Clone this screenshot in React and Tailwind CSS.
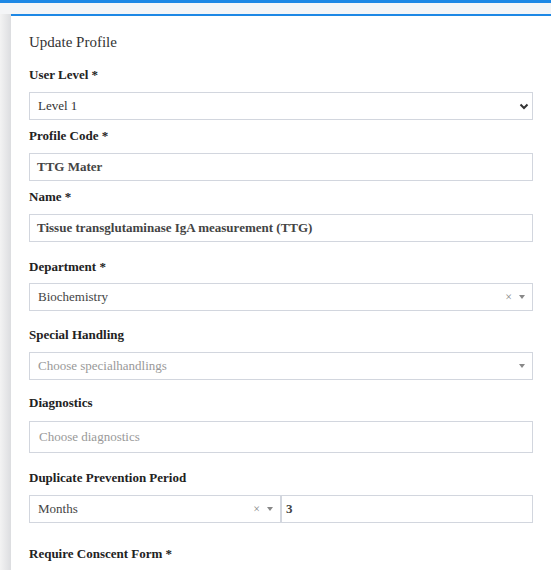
import { useState } from "react";

function Label({ children, className = "" }) {
    return (
        <div className={"text-[13px] leading-[18px] font-bold text-[#222] " + className}>
            {children}
        </div>
    );
}

function Arrow() {
    return (
        <span className="inline-block w-0 h-0 border-t-[4px] border-t-[#888] border-x-[3.5px] border-x-transparent" />
    );
}

function Select2({ value, placeholder, clearable, className = "" }) {
    return (
        <div
            className={
                "h-[28px] border border-[#d2d6de] bg-white flex items-center pl-[8px] pr-[7px] " +
                className
            }
        >
            <span
                className={
                    "flex-1 text-[13px] " +
                    (value ? "text-[#444]" : "text-[#999]")
                }
            >
                {value || placeholder}
            </span>
            {clearable && (
                <span className="text-[12px] text-[#888] mr-[7px] leading-none">
                    ×
                </span>
            )}
            <Arrow />
        </div>
    );
}

export default function App() {
    const [level] = useState("Level 1");

    return (
        <div
            className="min-h-[570px] bg-[#f4f5f7] flex flex-col"
            style={{ fontFamily: '"Liberation Serif", "Times New Roman", serif' }}
        >
            <div className="h-[3px] bg-[#1e88e5]" />
            <div className="flex flex-1 pt-[11px]">
                <div className="w-[11px] bg-gradient-to-r from-[#f3f3f3] to-[#dcdde0]" />
                <div className="flex-1 bg-white border-t-2 border-[#1e88e5] pl-[18px] pr-[18px] pt-[16px] pb-6">
                    <div className="text-[15px] leading-[20px] text-[#333]">
                        Update Profile
                    </div>

                    {/* user level */}
                    <Label className="mt-[14px]">User Level *</Label>
                    <div className="mt-[8px] h-[28px] border border-[#d2d6de] flex items-center pl-[8px] pr-[3px]">
                        <span className="flex-1 text-[13px] text-[#333]">{level}</span>
                        <svg width="10" height="7" viewBox="0 0 10 7">
                            <path
                                d="M1.5 1.5 L5 5 L8.5 1.5"
                                fill="none"
                                stroke="#333"
                                strokeWidth="2"
                            />
                        </svg>
                    </div>

                    <Label className="mt-[7px]">Profile Code *</Label>
                    <div className="mt-[8px] h-[28px] border border-[#d2d6de] flex items-center pl-[7px]">
                        <span className="text-[13px] font-bold text-[#444]">TTG Mater</span>
                    </div>

                    <Label className="mt-[7px]">Name *</Label>
                    <div className="mt-[8px] h-[28px] border border-[#d2d6de] flex items-center pl-[7px]">
                        <span className="text-[13px] font-bold text-[#444]">
                            Tissue transglutaminase IgA measurement (TTG)
                        </span>
                    </div>

                    <Label className="mt-[16px]">Department *</Label>
                    <Select2 className="mt-[7px]" value="Biochemistry" clearable />

                    <Label className="mt-[15px]">Special Handling</Label>
                    <Select2 className="mt-[8px]" placeholder="Choose specialhandlings" />

                    <Label className="mt-[14px]">Diagnostics</Label>
                    <div className="mt-[9px] h-[32px] border border-[#d2d6de] flex items-center pl-[9px]">
                        <span className="text-[13px] text-[#999]">Choose diagnostics</span>
                    </div>

                    <Label className="mt-[16px]">Duplicate Prevention Period</Label>
                    <div className="mt-[8px] grid grid-cols-2">
                        <Select2 value="Months" clearable />
                        <div className="h-[28px] border border-[#d2d6de] flex items-center pl-[4px]">
                            <span className="text-[13px] font-bold text-[#444]">3</span>
                        </div>
                    </div>

                    <Label className="mt-[22px]">Require Conscent Form *</Label>
                </div>
            </div>
        </div>
    );
}
